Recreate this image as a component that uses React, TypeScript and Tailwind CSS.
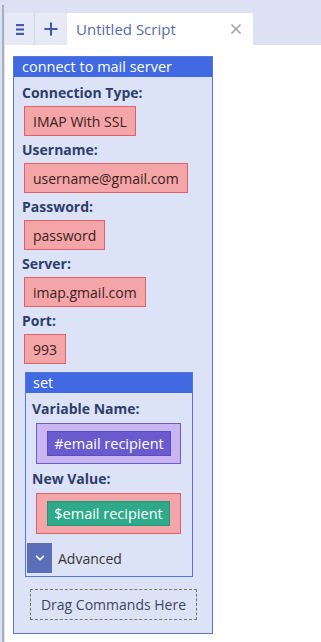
import { Plus, X, ChevronDown } from 'lucide-react';

const font = { fontFamily: '"Open Sans", "Noto Sans", sans-serif' };

const Field = ({ label, value }: { label: string; value: string }) => (
  <div className="flex flex-col items-start">
    <div className="h-5 leading-5 text-[14px] font-bold text-[#2f3e6b] pl-[8px]">{label}</div>
    <div className="mt-[3px] mb-[4px] ml-[10px] h-[30px] flex items-center px-[8px] bg-[#f3a5a7] border border-[#df6068] text-[14px] text-[#3a2222]">
      {value}
    </div>
  </div>
);

export default function App() {
  return (
    <div style={font} className="w-[321px] h-[642px] bg-white flex overflow-hidden">
      <div className="w-[5px] shrink-0 bg-[#dce2f4] flex">
        <div className="mt-[5px] ml-[2px] w-[2px] bg-[#a9afc2]" />
      </div>
      <div className="flex-1 flex flex-col">
        <div className="h-[13px] bg-[#dce2f4]" />
        <div className="h-[32px] flex bg-[#dce2f4]">
          <div className="w-[30px] flex items-center justify-center bg-[#e6eaf6] border-r border-[#d3d8ea]">
            <svg width="10" height="13" viewBox="0 0 10 13">
              <rect x="1" y="1" width="8" height="2.2" fill="#4a5aa8" />
              <rect x="1" y="5.4" width="8" height="2.2" fill="#4a5aa8" />
              <rect x="1" y="9.8" width="8" height="2.2" fill="#4a5aa8" />
            </svg>
          </div>
          <div className="w-[32px] flex items-center justify-center bg-[#e6eaf6]">
            <Plus size={20} strokeWidth={2.5} className="text-[#3e5aa8]" />
          </div>
          <div className="w-[186px] bg-white flex items-center justify-between pl-[9px] pr-[9px]">
            <span className="text-[15px] text-[#5a6aa8]">Untitled Script</span>
            <X size={16} strokeWidth={2.5} className="text-[#a0a3aa]" />
          </div>
        </div>
        <div className="pt-[11px] pl-[8px]">
          <div className="w-[200px] h-[578px] border border-[#5577dd] bg-[#dce3f6] flex flex-col">
            <div className="h-[20px] bg-[#4169e1] text-white text-[14.5px] leading-[20px] pl-[8px]">connect to mail server</div>
            <div className="pt-[6px] flex flex-col">
              <Field label="Connection Type:" value="IMAP With SSL" />
              <Field label="Username:" value="username@gmail.com" />
              <Field label="Password:" value="password" />
              <Field label="Server:" value="imap.gmail.com" />
              <Field label="Port:" value="993" />
            </div>
            <div className="mt-[4px] ml-[11px] w-[168px] h-[205px] border border-[#5577dd] bg-[#dce3f6] flex flex-col">
              <div className="h-[20px] bg-[#4169e1] text-white text-[14.5px] leading-[20px] pl-[7px]">set</div>
              <div className="mt-[6px] h-5 leading-5 text-[14px] font-bold text-[#2f3e6b] pl-[6px]">Variable Name:</div>
              <div className="mt-[4px] ml-[10px] w-[145px] h-[41px] bg-[#c9b6ef] border border-[#6b5fd0] flex items-center pl-[10px]">
                <div className="w-[124px] h-[25px] bg-[#6a5acd] border border-[#5a4cc0] text-white text-[14.5px] flex items-center justify-center">#email recipient</div>
              </div>
              <div className="mt-[5px] h-5 leading-5 text-[14px] font-bold text-[#2f3e6b] pl-[6px]">New Value:</div>
              <div className="mt-[4px] ml-[10px] w-[145px] h-[41px] bg-[#f3a5a7] border border-[#df6068] flex items-center pl-[10px]">
                <div className="w-[123px] h-[25px] bg-[#2eaa8a] border border-[#23967a] text-white text-[14.5px] flex items-center justify-center">$email recipient</div>
              </div>
              <div className="mt-[9px] flex items-center">
                <div className="ml-[1px] w-[25px] h-[30px] bg-[#5a6fb8] flex items-center justify-center">
                  <ChevronDown size={14} strokeWidth={3} className="text-white" />
                </div>
                <span className="ml-[6px] text-[14px] text-[#333]">Advanced</span>
              </div>
            </div>
            <div className="mt-[12px] ml-[16px] w-[167px] h-[31px] border border-dashed border-[#777] flex items-center justify-center text-[14px] text-[#3c4660]">
              Drag Commands Here
            </div>
          </div>
        </div>
      </div>
    </div>
  );
}
